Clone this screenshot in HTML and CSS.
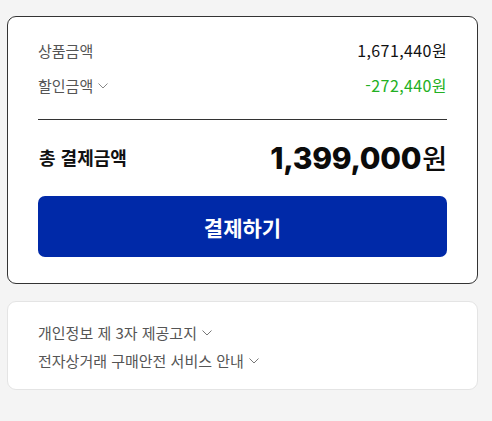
FILE: index.html
```html
<!DOCTYPE html>
<html lang="ko">
<head>
<meta charset="utf-8">
<link rel="stylesheet" href="styles.css">
</head>
<body>
<div class="page">
  <section class="card summary">
    <div class="row">
      <span class="label">상품금액</span>
      <span class="value">1,671,440원</span>
    </div>
    <div class="row">
      <span class="label">할인금액 <svg class="chev" width="10" height="6" viewBox="0 0 10 6"><path d="M0.5 0.5 L5 5 L9.5 0.5" fill="none" stroke="#888" stroke-width="1"/></svg></span>
      <span class="value discount">-272,440원</span>
    </div>
    <hr class="divider">
    <div class="total">
      <span class="total-label">총 결제금액</span>
      <span class="total-value"><span class="num">1,399,000</span><span class="won">원</span></span>
    </div>
    <button class="pay">결제하기</button>
  </section>
  <section class="card notice">
    <div class="notice-item">개인정보 제 3자 제공고지 <svg class="chev" width="10" height="6" viewBox="0 0 10 6"><path d="M0.5 0.5 L5 5 L9.5 0.5" fill="none" stroke="#777" stroke-width="1"/></svg></div>
    <div class="notice-item">전자상거래 구매안전 서비스 안내 <svg class="chev" width="10" height="6" viewBox="0 0 10 6"><path d="M0.5 0.5 L5 5 L9.5 0.5" fill="none" stroke="#777" stroke-width="1"/></svg></div>
  </section>
</div>
</body>
</html>
```
FILE: styles.css
```css
* { box-sizing: border-box; }
html, body { margin: 0; background: #f4f4f4; }
body {
  font-family: "Noto Sans CJK KR", "Noto Sans", sans-serif;
  color: #222;
}
.page {
  width: 471px;
  margin-left: 7px;
  padding-top: 16px;
  display: flex;
  flex-direction: column;
  gap: 17px;
}
.card {
  background: #fff;
  border-radius: 9px;
}
.summary {
  border: 1px solid #333;
  padding: 21px 30px 26px 30px;
}
.row {
  display: flex;
  justify-content: space-between;
  align-items: center;
  height: 24px;
  font-size: 15px;
}
.row + .row { margin-top: 11px; }
.label {
  color: #555;
  display: flex;
  align-items: center;
  gap: 5px;
}
.value {
  color: #111;
  font-size: 16px;
  letter-spacing: 0.4px;
}
.discount { color: #23b023; }
.chev { display: block; margin-top: 1px; }
.divider {
  border: 0;
  border-top: 1px solid #333;
  margin: 22px 0 0 0;
  height: 0;
}
.total {
  margin-top: 17px;
  height: 40px;
  display: flex;
  justify-content: space-between;
  align-items: center;
}
.total-label {
  font-size: 18px;
  font-weight: 700;
  color: #111;
  padding-left: 1px;
}
.total-value {
  display: flex;
  align-items: baseline;
  color: #0b0b0b;
}
.num {
  font-family: Inter, Roboto, sans-serif;
  font-weight: 800;
  font-size: 30px;
  letter-spacing: -0.3px;
}
.won {
  font-size: 27px;
  font-weight: 500;
  margin-left: 1px;
}
.pay {
  display: block;
  width: 100%;
  margin-top: 19px;
  height: 61px;
  border: 0;
  border-radius: 7px;
  background: #0029a8;
  color: #fff;
  font-family: "Noto Sans CJK KR", sans-serif;
  font-weight: 700;
  font-size: 21px;
}
.notice {
  border: 1px solid #e4e4e4;
  padding: 16px 30px 15px 30px;
}
.notice-item {
  height: 28px;
  display: flex;
  align-items: center;
  gap: 5px;
  font-size: 15px;
  color: #555;
}
```
